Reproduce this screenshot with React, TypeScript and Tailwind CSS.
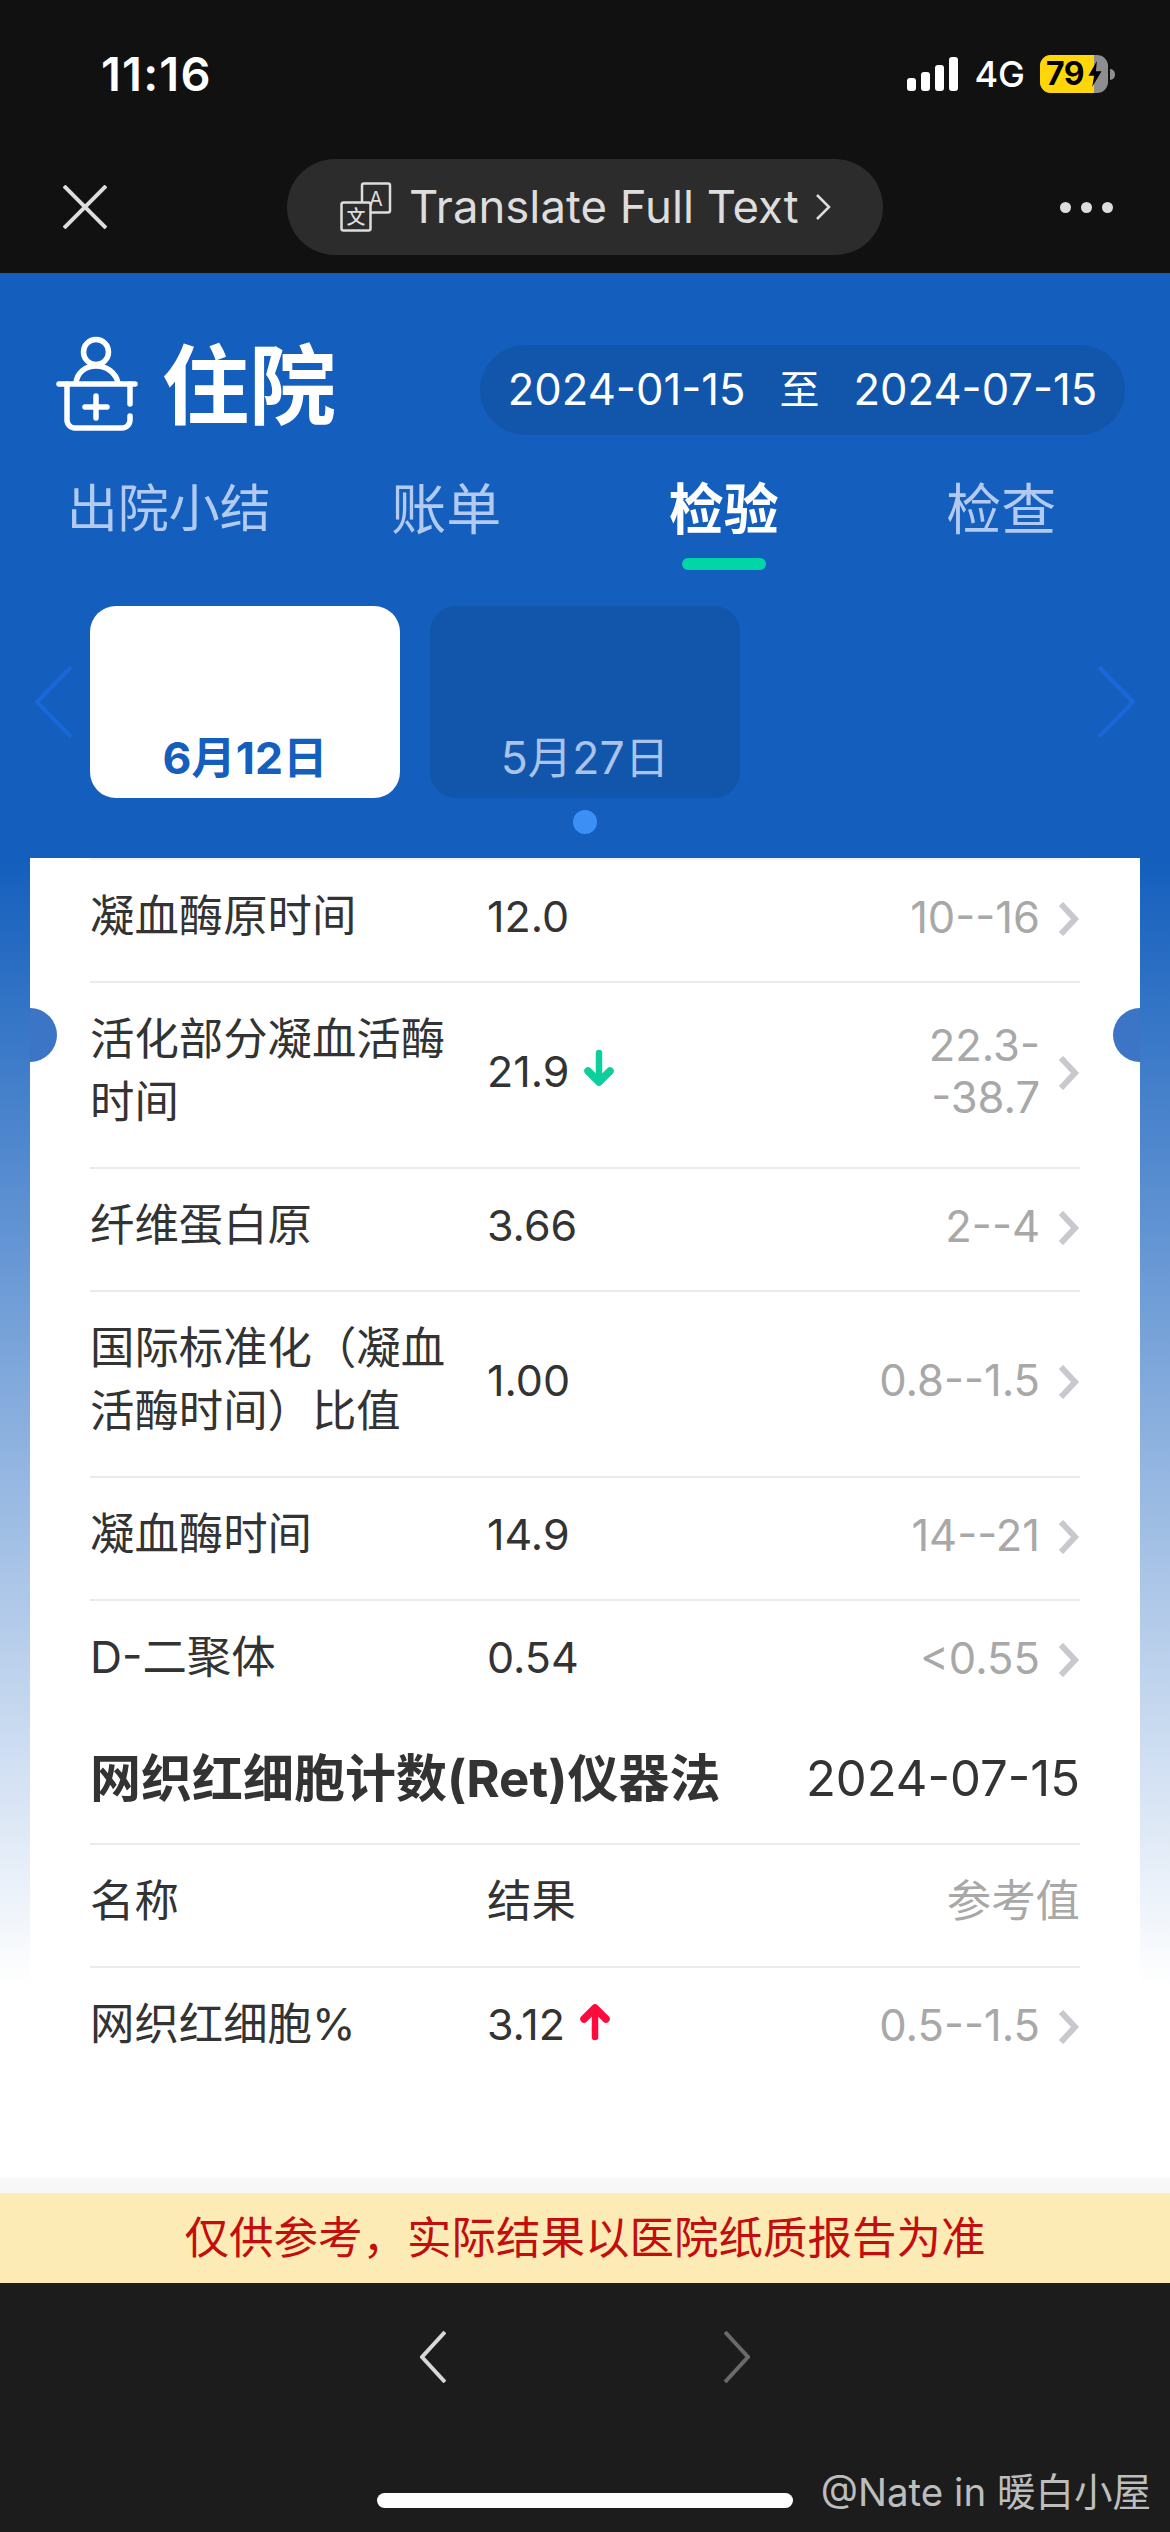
import React from "react";

type Row = { name: string; value: string; ref: string; flag?: "up" | "down" };

const rowsA: Row[] = [
  { name: "凝血酶原时间", value: "12.0", ref: "10--16" },
  { name: "活化部分凝血活酶时间", value: "21.9", ref: "22.3--38.7", flag: "down" },
  { name: "纤维蛋白原", value: "3.66", ref: "2--4" },
  { name: "国际标准化（凝血活酶时间）比值", value: "1.00", ref: "0.8--1.5" },
  { name: "凝血酶时间", value: "14.9", ref: "14--21" },
];

function Arrow({ dir }: { dir: "up" | "down" }) {
  const cls = dir === "up" ? "text-[#ff0a3c] rotate-180" : "text-[#0ccf9c]";
  return (
    <svg viewBox="0 0 32 38" className={`w-[32px] h-[38px] ml-[14px] -mt-[6px] ${cls}`} fill="none" stroke="currentColor" strokeLinecap="round" strokeLinejoin="round">
      <path d="M16 4V32" strokeWidth="6.5" />
      <path d="M5 22L16 33L27 22" strokeWidth="7.5" />
    </svg>
  );
}

function RowChevron() {
  return (
    <svg viewBox="0 0 22 34" className="w-[22px] h-[34px] shrink-0 ml-[18px] mt-[4px]" fill="none" stroke="#c8c8ce" strokeWidth="6" strokeLinejoin="miter">
      <path d="M3 2L17 17L3 32" />
    </svg>
  );
}

function DataRow({ row, last }: { row: Row; last?: boolean }) {
  return (
    <div className={`flex items-center pt-[25px] pb-[33px] ${last ? "border-b-0" : "border-b-2 border-[#ebebeb]"}`}>
      <div className="w-[397px] shrink-0 pr-[29px] text-[44.4px] leading-[63px] text-[#333]">{row.name}</div>
      <div className="flex items-center text-[43px] leading-[63px] text-[#333]">
        {row.value}
        {row.flag && <Arrow dir={row.flag} />}
      </div>
      <div className="ml-auto flex items-center">
        <div className="w-[175px] text-right text-[43.5px] leading-[52px] text-[#a8a8a8]">{row.ref}</div>
        <RowChevron />
      </div>
    </div>
  );
}

export default function App() {
  return (
    <div className="w-[1170px] h-[2532px] flex flex-col overflow-hidden font-['Inter','Noto_Sans_CJK_SC',sans-serif]">
      {/* top chrome */}
      <header className="h-[273px] shrink-0 bg-[#111111] pt-[46px]">
        <div className="h-[56px] flex items-center pl-[101px] pr-[55px]">
          <span className="text-[47px] font-semibold tracking-[1.2px] text-white">11:16</span>
          <div className="ml-auto flex items-center">
            <div className="flex items-end gap-[5px] h-[34px]">
              <span className="w-[9px] h-[13px] rounded-[3px] bg-white" />
              <span className="w-[9px] h-[19px] rounded-[3px] bg-white" />
              <span className="w-[9px] h-[26px] rounded-[3px] bg-white" />
              <span className="w-[9px] h-[34px] rounded-[3px] bg-white" />
            </div>
            <span className="ml-[16px] text-[36px] font-medium text-white">4G</span>
            <div className="ml-[15px] w-[68px] h-[38px] rounded-[11px] overflow-hidden flex bg-[#8e8e8e] relative">
              <div className="w-[54px] bg-[#ffd60a] pl-[6px] text-[32px] leading-[38px] font-bold text-black tracking-[-0.5px]">79</div>
              <svg viewBox="0 0 16 30" className="absolute left-[47px] top-[5px] w-[16px] h-[28px]">
                <path d="M10 1L1 17H7L5 29L15 12H9Z" fill="#000" />
              </svg>
            </div>
            <span className="ml-[2px] w-[5px] h-[11px] rounded-r-[5px] bg-[#8e8e8e]" />
          </div>
        </div>
        <div className="mt-[57px] flex items-center pl-[63px] pr-[57px]">
          <svg viewBox="0 0 44 44" className="w-[44px] h-[44px] shrink-0" stroke="#dddddd" strokeWidth="4" fill="none">
            <path d="M1 1L43 43M43 1L1 43" />
          </svg>
          <div className="ml-[180px] w-[596px] h-[96px] rounded-[48px] bg-[#2c2c2c] flex items-center pl-[53px]">
            <svg viewBox="0 0 52 50" className="w-[52px] h-[50px] shrink-0">
              <rect x="22" y="1.5" width="28" height="29" rx="2" fill="none" stroke="#dddddd" strokeWidth="2.5" />
              <text x="36" y="24" fontSize="20" textAnchor="middle" fill="#dddddd" fontFamily="Inter">A</text>
              <rect x="1.5" y="20.5" width="29" height="28" rx="2" fill="#2c2c2c" stroke="#dddddd" strokeWidth="2.5" />
              <text x="16" y="42" fontSize="19" fontWeight="500" textAnchor="middle" fill="#dddddd" fontFamily="Noto Sans CJK SC">文</text>
            </svg>
            <span className="ml-[17px] text-[45.5px] leading-none text-[#dddddd] whitespace-nowrap">Translate Full Text</span>
            <svg viewBox="0 0 16 26" className="ml-[16px] w-[16px] h-[26px] shrink-0" fill="none" stroke="#dddddd" strokeWidth="2.5">
              <path d="M2 1L14 13L2 25" />
            </svg>
          </div>
          <div className="ml-auto flex gap-[10px]">
            <span className="w-[11px] h-[11px] rounded-full bg-[#dddddd]" />
            <span className="w-[11px] h-[11px] rounded-full bg-[#dddddd]" />
            <span className="w-[11px] h-[11px] rounded-full bg-[#dddddd]" />
          </div>
        </div>
      </header>

      {/* page */}
      <main className="h-[1905px] shrink-0 flex flex-col bg-[linear-gradient(180deg,#145fbd_587px,#ffffff_1712px)]">
        <div className="mt-[64px] h-[98px] flex items-center pl-[52px] pr-[45px]">
          <svg viewBox="0 0 90 100" className="w-[90px] h-[100px] shrink-0" fill="none" stroke="#ffffff" strokeWidth="5.5" strokeLinecap="round" strokeLinejoin="round">
            <circle cx="44" cy="16" r="12.5" />
            <path d="M24 47C25 37 33 30 44 30C55 30 64 37 66 47" />
            <path d="M7 48H83" />
            <path d="M15 48V84A8 8 0 0 0 23 92H70A8 8 0 0 0 78 84V80" />
            <path d="M78 68V48" />
            <path d="M44 60V82M33 71H55" />
          </svg>
          <span className="ml-[20px] text-[87px] leading-none font-bold text-white">住院</span>
          <div className="ml-auto mt-[8px] h-[90px] w-[645px] rounded-[45px] bg-[#1256ab] flex items-center justify-center text-[43.6px] text-white whitespace-nowrap">
            <span>2024-01-15</span>
            <span className="mx-[34px] text-[40px]">至</span>
            <span>2024-07-15</span>
          </div>
        </div>

        <nav className="mx-[30px] mt-[29px] grid grid-cols-4">
          <div className="h-[90px] flex items-center justify-center text-[51px] text-[#b3caf0]">出院小结</div>
          <div className="h-[90px] flex items-center justify-center text-[55px] text-[#b3caf0]">账单</div>
          <div className="h-[90px] flex flex-col items-center justify-center text-[55px] font-bold text-white relative">
            检验
            <span className="absolute left-1/2 -translate-x-1/2 top-[94px] w-[84px] h-[12px] rounded-[6px] bg-[#02d6a6]" />
          </div>
          <div className="h-[90px] flex items-center justify-center text-[55px] text-[#b3caf0]">检查</div>
        </nav>

        <div className="mt-[52px] h-[192px] flex items-center pl-[35px] pr-[35px]">
          <svg viewBox="0 0 38 72" className="w-[38px] h-[72px] shrink-0" fill="none" stroke="#1868dc" strokeWidth="4">
            <path d="M36 1L2 36L36 71" />
          </svg>
          <div className="ml-[17px] w-[310px] h-[192px] rounded-[26px] bg-white flex items-end justify-center pb-[16px] text-[44.5px] leading-[48px] font-bold text-[#145fbd]">
            6月12日
          </div>
          <div className="ml-[30px] w-[310px] h-[192px] rounded-[26px] bg-[#1256ab] flex items-end justify-center pb-[16px] text-[44.5px] leading-[48px] text-[#a9c3ea]">
            5月27日
          </div>
          <svg viewBox="0 0 38 72" className="ml-auto w-[38px] h-[72px] shrink-0" fill="none" stroke="#1868dc" strokeWidth="4">
            <path d="M2 1L36 36L2 71" />
          </svg>
        </div>

        <div className="mt-[12px] flex justify-center">
          <span className="w-[24px] h-[24px] rounded-full bg-[#3c8ff5]" />
        </div>

        <section className="relative mx-[30px] mt-[24px] flex-1 bg-white px-[60px]">
          <span className="absolute left-0 top-[150px] w-[27px] h-[54px] rounded-r-[27px] bg-[#3c74c6]" />
          <span className="absolute right-0 top-[150px] w-[27px] h-[54px] rounded-l-[27px] bg-[#3c74c6]" />
          <div className="border-t-2 border-[#eef2f7]" />
          {rowsA.map((r) => (
            <DataRow key={r.name} row={r} />
          ))}
          <DataRow row={{ name: "D-二聚体", value: "0.54", ref: "<0.55" }} last />
          <div className="flex items-center pt-[25px] pb-[33px] border-b-2 border-[#ebebeb] leading-[63px] text-[#333]">
            <span className="text-[51px] font-bold whitespace-nowrap">网织红细胞计数(Ret)仪器法</span>
            <span className="ml-auto text-[49px]">2024-07-15</span>
          </div>
          <div className="flex items-center pt-[25px] pb-[33px] border-b-2 border-[#ebebeb] text-[44.4px] leading-[63px]">
            <span className="w-[397px] shrink-0 text-[#333]">名称</span>
            <span className="text-[#333]">结果</span>
            <span className="ml-auto text-[#a8a8a8]">参考值</span>
          </div>
          <DataRow row={{ name: "网织红细胞%", value: "3.12", ref: "0.5--1.5", flag: "up" }} last />
        </section>
      </main>

      <div className="h-[15px] shrink-0 bg-[#f7f7f7]" />
      <div className="h-[90px] shrink-0 bg-[#fdebb5] flex items-center justify-center text-[44.5px] text-[#c40d0d]">
        仅供参考，实际结果以医院纸质报告为准
      </div>

      {/* bottom chrome */}
      <footer className="relative flex-1 bg-[#1c1c1c] flex flex-col items-center pt-[48px]">
        <div className="flex items-center gap-[278px]">
          <svg viewBox="0 0 26 52" className="w-[26px] h-[52px]" fill="none" stroke="#d8d8d8" strokeWidth="4">
            <path d="M25 1L2 26L25 51" />
          </svg>
          <svg viewBox="0 0 26 52" className="w-[26px] h-[52px]" fill="none" stroke="#6a6a6a" strokeWidth="4">
            <path d="M1 1L24 26L1 51" />
          </svg>
        </div>
        <div className="mt-[110px] w-[416px] h-[15px] rounded-full bg-white" />
        <span className="absolute right-[19px] top-[184px] text-[38.5px] leading-[50px] text-[#bdbdbd] whitespace-nowrap">@Nate in 暖白小屋</span>
      </footer>
    </div>
  );
}
